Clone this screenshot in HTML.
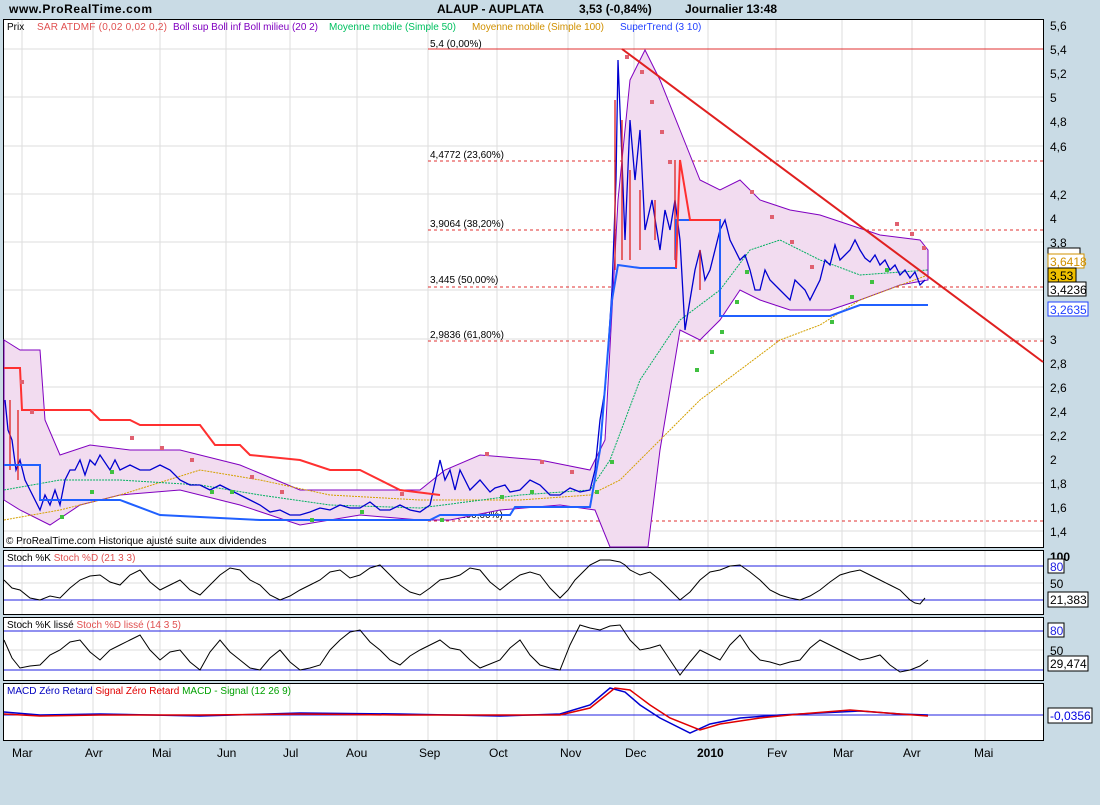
<!DOCTYPE html><html><head><style>
body{margin:0;width:1100px;height:800px;background:#c9dbe5;font-family:"Liberation Sans",sans-serif;overflow:hidden}
svg text{font-family:"Liberation Sans",sans-serif}
</style></head><body>
<svg width="1100" height="800" xmlns="http://www.w3.org/2000/svg">
<rect width="1100" height="800" fill="#c9dbe5"/>
<text x="9" y="13" font-size="12" font-weight="bold" textLength="143">www.ProRealTime.com</text>
<text x="437" y="13" font-size="12" font-weight="bold">ALAUP - AUPLATA</text>
<text x="579" y="13" font-size="12" font-weight="bold">3,53 (-0,84%)</text>
<text x="685" y="13" font-size="12" font-weight="bold">Journalier  13:48</text>
<rect x="3.5" y="19.5" width="1040" height="528" fill="#fff" stroke="#000"/>
<rect x="3.5" y="550.5" width="1040" height="64" fill="#fff" stroke="#000"/>
<rect x="3.5" y="617.5" width="1040" height="63" fill="#fff" stroke="#000"/>
<rect x="3.5" y="683.5" width="1040" height="57" fill="#fff" stroke="#000"/>
<g stroke="#ddd">
<path d="M22 20V547M93 20V547M160 20V547M226 20V547M290 20V547M357 20V547M428 20V547M497 20V547M568 20V547M634 20V547M708 20V547M776 20V547M842 20V547M912 20V547M985 20V547"/>
<path d="M22 551V614M93 551V614M160 551V614M226 551V614M290 551V614M357 551V614M428 551V614M497 551V614M568 551V614M634 551V614M708 551V614M776 551V614M842 551V614M912 551V614M985 551V614"/>
<path d="M22 618V680M93 618V680M160 618V680M226 618V680M290 618V680M357 618V680M428 618V680M497 618V680M568 618V680M634 618V680M708 618V680M776 618V680M842 618V680M912 618V680M985 618V680"/>
<path d="M22 684V740M93 684V740M160 684V740M226 684V740M290 684V740M357 684V740M428 684V740M497 684V740M568 684V740M634 684V740M708 684V740M776 684V740M842 684V740M912 684V740M985 684V740"/>
<path d="M4 49H1043M4 97H1043M4 146H1043M4 194H1043M4 242H1043M4 290H1043M4 339H1043M4 387H1043M4 435H1043M4 483H1043M4 531H1043"/>
<path d="M4 583H1043M4 650H1043"/>
</g>
<g stroke="#e03030" stroke-dasharray="3,3">
<path d="M428 161H1043M428 230H1043M428 287H1043M428 341H1043M428 521H1043"/>
</g>
<path d="M428 49H1043" stroke="#e03030"/>
<g font-size="10" fill="#000">
<text x="430" y="47">5,4 (0,00%)</text>
<text x="430" y="158">4,4772 (23,60%)</text>
<text x="430" y="227">3,9064 (38,20%)</text>
<text x="430" y="283">3,445 (50,00%)</text>
<text x="430" y="338">2,9836 (61,80%)</text>
<text x="440" y="518">1,4 (100,00%)</text>
</g>
<path d="M4 340 L20 350 L40 350 L45 420 L60 455 L90 445 L130 450 L180 450 L240 465 L300 490 L360 490 L420 490 L445 470 L480 455 L540 460 L590 470 L605 440 L618 200 L630 80 L645 50 L660 80 L680 130 L700 180 L720 190 L740 180 L760 200 L790 210 L820 215 L850 225 L880 235 L920 240 L928 250 L928 280 L900 285 L860 300 L830 310 L790 310 L760 300 L740 290 L720 320 L700 340 L680 330 L660 450 L648 547 L610 547 L595 510 L560 505 L500 510 L450 520 L420 520 L360 515 L300 525 L240 505 L180 490 L120 495 L80 505 L50 525 L20 510 L4 500 Z" fill="#f2dcf0" stroke="#8000c0" stroke-width="1"/>
<polyline fill="none" stroke="#d4a000" stroke-dasharray="2,1" points="4,520 60,510 120,495 200,470 260,480 330,495 420,500 520,500 590,495 620,480 660,440 700,400 740,370 780,340 820,325 860,300 928,275"/>
<polyline fill="none" stroke="#00b060" stroke-dasharray="2,1" points="4,490 60,480 120,480 200,485 260,495 330,505 420,508 520,495 590,490 610,460 640,380 680,320 720,290 750,250 780,240 820,260 860,275 928,270"/>
<polyline fill="none" stroke="#0000d0" stroke-width="1.3" points="5,400 8,430 12,440 16,470 20,460 25,480 30,490 35,500 40,510 45,495 50,505 55,490 60,505 65,480 70,470 75,470 80,460 85,475 90,460 95,465 100,455 110,470 115,460 120,470 130,465 140,470 150,470 160,465 170,470 180,480 190,485 200,485 210,490 220,485 230,490 240,495 250,500 260,505 270,512 280,510 290,515 300,515 310,512 320,508 330,510 340,505 350,508 360,508 370,502 380,510 390,510 400,505 410,510 420,512 430,505 440,460 445,480 450,470 455,490 460,470 470,490 480,480 490,492 495,488 505,485 510,492 520,490 530,480 540,485 550,495 560,495 570,488 580,492 590,490 595,470 600,420 605,390 608,350 612,290 616,180 618,60 622,160 625,240 630,120 635,180 640,130 645,230 652,200 660,250 665,210 670,230 675,200 680,240 685,330 690,300 695,270 700,250 705,280 710,270 715,250 720,230 725,220 730,240 735,250 740,260 745,255 750,270 755,290 760,290 765,270 770,280 780,290 790,300 795,280 805,290 810,300 820,280 825,260 830,265 835,245 840,260 845,255 850,250 855,240 860,250 865,258 870,262 875,255 880,265 885,260 890,270 895,265 900,275 905,270 910,278 915,272 920,285 925,280"/>
<g stroke="#e02020" stroke-width="1.3" fill="none">
<path d="M10 400V470M18 410V480M615 100V270M622 120V260M630 170V260M640 190V250M655 200V240M675 160V260M700 250V290"/>
</g>
<polyline fill="none" stroke="#ff3030" stroke-width="2" points="4,368 20,368 22,410 90,410 100,420 130,420 140,425 200,425 215,445 240,445 250,455 300,460 330,470 360,470 400,490 440,495"/>
<polyline fill="none" stroke="#2060ff" stroke-width="2" points="4,465 40,465 40,500 120,500 160,515 260,520 430,520 440,515 510,515 515,507 590,507 600,450 612,300 618,265 640,268 676,268 676,220 720,220 720,316 830,316 860,305 928,305"/>
<polyline fill="none" stroke="#ff3030" stroke-width="2" points="676,268 680,160 690,220 720,220"/>
<g fill="#e06070">
<path d="M625 55h4v4h-4zM640 70h4v4h-4zM650 100h4v4h-4zM660 130h4v4h-4zM668 160h4v4h-4zM750 190h4v4h-4zM770 215h4v4h-4zM790 240h4v4h-4zM810 265h4v4h-4zM895 222h4v4h-4zM910 232h4v4h-4zM922 246h4v4h-4zM130 436h4v4h-4zM160 446h4v4h-4zM190 458h4v4h-4zM250 475h4v4h-4zM280 490h4v4h-4zM400 492h4v4h-4zM540 460h4v4h-4zM570 470h4v4h-4zM485 452h4v4h-4zM20 380h4v4h-4zM30 410h4v4h-4z"/>
</g>
<g fill="#40c040">
<path d="M60 515h4v4h-4zM90 490h4v4h-4zM110 470h4v4h-4zM210 490h4v4h-4zM230 490h4v4h-4zM310 518h4v4h-4zM360 510h4v4h-4zM440 518h4v4h-4zM500 495h4v4h-4zM530 490h4v4h-4zM595 490h4v4h-4zM610 460h4v4h-4zM695 368h4v4h-4zM710 350h4v4h-4zM720 330h4v4h-4zM735 300h4v4h-4zM745 270h4v4h-4zM830 320h4v4h-4zM850 295h4v4h-4zM870 280h4v4h-4zM885 268h4v4h-4z"/>
</g>
<path d="M622 49L1043 362" stroke="#e02020" stroke-width="2"/>
<g font-size="10">
<text x="7" y="30">Prix</text>
<text x="37" y="30" fill="#e05050" textLength="130">SAR ATDMF (0,02 0,02 0,2)</text>
<text x="173" y="30" fill="#8000c0" textLength="145">Boll sup Boll inf Boll milieu (20 2)</text>
<text x="329" y="30" fill="#00c060" textLength="127">Moyenne mobile (Simple 50)</text>
<text x="472" y="30" fill="#d09000" textLength="132">Moyenne mobile (Simple 100)</text>
<text x="620" y="30" fill="#2040ff">SuperTrend (3 10)</text>
<text x="6" y="544">© ProRealTime.com Historique ajusté suite aux dividendes</text>
<text x="7" y="561">Stoch %K <tspan fill="#e05050">Stoch %D (21 3 3)</tspan></text>
<text x="7" y="628">Stoch %K lissé <tspan fill="#e05050">Stoch %D lissé (14 3 5)</tspan></text>
<text x="7" y="694" fill="#0000c0">MACD Zéro Retard <tspan fill="#e00000">Signal Zéro Retard</tspan> <tspan fill="#00a000">MACD - Signal (12 26 9)</tspan></text>
</g>
<path d="M4 566H1043M4 600H1043M4 631H1043M4 670H1043M4 715H1043" stroke="#2020e0"/>
<polyline fill="none" stroke="#000" points="4,580 12,588 20,590 30,598 40,600 50,596 60,598 70,588 80,580 90,576 100,575 110,582 120,585 130,575 140,570 150,582 160,590 170,585 180,580 190,590 200,595 210,585 220,575 230,568 240,570 250,580 260,585 270,595 280,600 290,596 300,590 310,585 320,580 330,572 340,570 350,578 360,575 370,568 380,565 390,575 400,585 410,592 420,595 430,588 440,580 450,578 460,575 470,568 480,570 490,582 500,590 510,582 520,575 530,572 540,575 550,588 560,598 568,590 575,580 585,570 590,565 600,560 610,560 620,562 625,565 630,570 640,575 650,572 660,580 670,590 680,600 690,592 700,580 710,572 720,570 730,566 740,565 750,572 760,580 770,590 780,595 790,598 800,600 810,596 820,590 830,582 840,575 850,572 860,570 870,575 880,580 890,585 900,590 910,600 915,603 920,604 925,598"/>
<polyline fill="none" stroke="#000" points="4,640 12,658 20,668 30,666 40,665 50,655 60,650 70,642 80,640 90,652 100,660 110,650 120,645 130,640 140,635 150,650 160,660 170,652 180,650 190,662 200,670 210,652 220,640 230,652 240,660 250,668 260,670 270,658 280,650 290,662 300,670 310,668 320,665 330,650 340,640 350,632 360,630 370,642 380,650 390,660 400,665 410,656 420,650 430,645 440,640 450,648 460,650 470,660 480,668 490,664 500,660 510,648 520,640 530,655 540,665 550,668 560,670 570,645 580,625 590,628 600,630 610,626 620,625 630,640 640,650 650,648 660,645 670,660 680,675 690,662 700,650 710,655 720,660 730,645 740,635 750,650 760,660 770,662 780,665 790,662 800,660 810,648 820,640 830,645 840,650 850,655 860,660 870,658 880,655 890,665 900,672 910,670 915,668 920,666 928,660"/>
<polyline fill="none" stroke="#0000d0" stroke-width="1.5" points="4,712 40,715 100,714 200,716 300,713 400,714 500,716 560,714 590,705 610,688 625,692 640,705 660,718 690,733 710,724 740,718 780,715 820,713 860,711 900,714 928,715"/>
<polyline fill="none" stroke="#e00000" stroke-width="1.5" points="4,714 40,716 100,715 200,715 300,714 400,715 500,715 560,715 590,708 615,688 630,690 650,705 670,718 700,730 720,724 760,718 800,714 850,710 900,714 928,716"/>
<g font-size="12" fill="#000">
<text x="1050" y="30">5,6</text><text x="1050" y="54">5,4</text><text x="1050" y="78">5,2</text><text x="1050" y="102">5</text><text x="1050" y="126">4,8</text><text x="1050" y="151">4,6</text><text x="1050" y="199">4,2</text><text x="1050" y="223">4</text><text x="1050" y="247">3,8</text><text x="1050" y="344">3</text><text x="1050" y="368">2,8</text><text x="1050" y="392">2,6</text><text x="1050" y="416">2,4</text><text x="1050" y="440">2,2</text><text x="1050" y="464">2</text><text x="1050" y="488">1,8</text><text x="1050" y="512">1,6</text><text x="1050" y="536">1,4</text>
<text x="1050" y="561" font-weight="bold">100</text><text x="1050" y="588">50</text><text x="1050" y="655">50</text><text x="1050" y="718">0,5</text>
</g>
<g font-size="12">
<rect x="1048" y="248" width="32" height="14" fill="#fff" stroke="#000"/>
<rect x="1048" y="254" width="36" height="14" fill="#fff" stroke="#d09000"/><text x="1050" y="266" fill="#d09000">3,6418</text>
<rect x="1048" y="268" width="28" height="14" fill="#f0c000" stroke="#000"/><text x="1050" y="280">3,53</text>
<rect x="1048" y="282" width="38" height="14" fill="#fff" stroke="#000"/><text x="1050" y="294">3,4236</text>
<rect x="1048" y="302" width="40" height="14" fill="#fff" stroke="#2040ff"/><text x="1050" y="314" fill="#2040ff">3,2635</text>
<rect x="1048" y="559" width="16" height="14" fill="#fff" stroke="#000"/><text x="1050" y="571" fill="#2020e0">80</text>
<rect x="1048" y="592" width="40" height="15" fill="#fff" stroke="#000"/><text x="1050" y="604">21,383</text>
<rect x="1048" y="623" width="16" height="14" fill="#fff" stroke="#000"/><text x="1050" y="635" fill="#2020e0">80</text>
<rect x="1048" y="656" width="40" height="15" fill="#fff" stroke="#000"/><text x="1050" y="668">29,474</text>
<rect x="1048" y="708" width="44" height="15" fill="#fff" stroke="#000"/><text x="1050" y="720" fill="#0000e0">-0,0356</text>
</g>
<g font-size="12">
<text x="12" y="757">Mar</text><text x="85" y="757">Avr</text><text x="152" y="757">Mai</text><text x="217" y="757">Jun</text><text x="283" y="757">Jul</text><text x="346" y="757">Aou</text><text x="419" y="757">Sep</text><text x="489" y="757">Oct</text><text x="560" y="757">Nov</text><text x="625" y="757">Dec</text><text x="697" y="757" font-weight="bold">2010</text><text x="767" y="757">Fev</text><text x="833" y="757">Mar</text><text x="903" y="757">Avr</text><text x="974" y="757">Mai</text>
</g>
</svg>
</body></html>
